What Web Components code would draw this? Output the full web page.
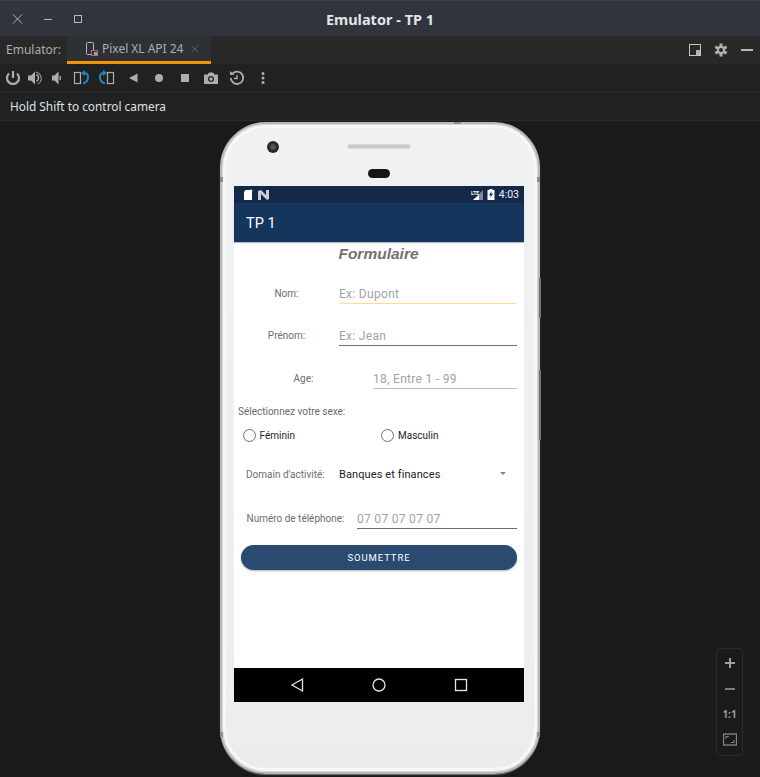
<!DOCTYPE html>
<html lang="fr">
<head>
<meta charset="utf-8">
<title>Emulator - TP 1</title>
<style>
  html, body { margin: 0; height: 100%; background: #1a1a1a; overflow: hidden; }
  body { font-family: "Noto Sans", sans-serif; display: flex; flex-direction: column; }
</style>
</head>
<body>
<emu-titlebar>Emulator - TP 1</emu-titlebar>
<emu-tabbar></emu-tabbar>
<emu-toolbar></emu-toolbar>
<emu-notice>Hold Shift to control camera</emu-notice>
<emu-stage>
  <phone-shell>
    <tp-form></tp-form>
  </phone-shell>
</emu-stage>

<script>
class EmuTitlebar extends HTMLElement {
  constructor() {
    super();
    this.attachShadow({mode: "open"}).innerHTML = `
      <style>
        :host { display: grid; grid-template-columns: 1fr auto 1fr; align-items: center; height: 36px; box-sizing: border-box;
                background: #30343d; border-top: 1px solid #3b404a; color: #e2e4e8; font-size: 14.500px; font-weight: 700; }
        .btns { display: flex; padding-left: 3px; }
        .btns svg { width: 30px; height: 16px; }
      </style>
      <div class="btns">
        <svg viewBox="0 0 30 16" fill="none" stroke="#b4b7bc"><path d="M10 3.500l9 9M19 3.500l-9 9"/></svg>
        <svg viewBox="0 0 30 16" fill="none" stroke="#b4b7bc"><path d="M11 8.500h8"/></svg>
        <svg viewBox="0 0 30 16" fill="none" stroke="#b4b7bc"><rect x="11.500" y="4.500" width="7" height="7"/></svg>
      </div>
      <slot></slot>
      <span></span>`;
  }
}

class EmuTabbar extends HTMLElement {
  constructor() {
    super();
    this.attachShadow({mode: "open"}).innerHTML = `
      <style>
        :host { display: flex; align-items: stretch; height: 28px; box-sizing: border-box; background: #282828; color: #a9afb6; font-size: 12px; }
        .lbl { width: 67px; padding-left: 6px; box-sizing: border-box; line-height: 28px; }
        .tab { width: 144px; box-sizing: border-box; background: #2f3033; border-bottom: 3px solid #f29600; display: flex; align-items: center; padding-left: 18px; }
        .tab svg { width: 14px; height: 16px; margin-right: 3px; }
        .tab span { letter-spacing: -.02px; }
        .tab svg.x { width: 8px; height: 8px; margin: 0 0 0 8px; }
        .right { margin-left: auto; display: flex; align-items: center; }
        .right svg { width: 26px; height: 16px; }
      </style>
      <div class="lbl">Emulator:</div>
      <div class="tab">
        <svg viewBox="0 0 14 16" fill="none"><rect x="1.500" y="1.500" width="7" height="12" rx="1" stroke="#b4b7bc"/><rect x="6.500" y="9.500" width="6" height="5" fill="#2f3033" stroke="#8d6fc0"/><rect x="9" y="11" width="3" height="3" fill="#f29600"/></svg>
        <span>Pixel XL API 24</span>
        <svg class="x" viewBox="0 0 8 8" fill="none" stroke="#5e6165"><path d="M.5 .5l7 7M7.500 .5l-7 7"/></svg>
      </div>
      <div class="right">
        <svg viewBox="0 0 26 16"><rect x="7.500" y="2.500" width="11" height="11" fill="none" stroke="#c4c4c4"/><rect x="14" y="8" width="4" height="5" fill="#b4b4b4"/></svg>
        <svg viewBox="0 0 26 16"><g fill="#b0b0b0"><circle cx="13" cy="8" r="4.200"/><rect x="11.500" y="1.500" width="3" height="13"/><rect x="11.500" y="1.500" width="3" height="13" transform="rotate(60 13 8)"/><rect x="11.500" y="1.500" width="3" height="13" transform="rotate(120 13 8)"/></g><circle cx="13" cy="8" r="2" fill="#282828"/></svg>
        <svg viewBox="0 0 26 16"><rect x="7" y="7" width="12" height="2" fill="#b8b8b8"/></svg>
      </div>`;
  }
}

class EmuToolbar extends HTMLElement {
  constructor() {
    super();
    const g = "#adadad", b = "#1f87c9";
    const rot = (flip) => `<svg viewBox="0 0 26 16" fill="none">
      <g ${flip ? 'transform="translate(26 0) scale(-1 1)"' : ""}>
        <rect x="6.500" y="2.500" width="6" height="11" stroke="${g}" stroke-width="1.200"/>
        <path d="M16 3h.5a3.500 3.500 0 0 1 3.500 4c0 3-2 5.500-5 6.500" stroke="${b}" stroke-width="2"/>
        <path d="M17 0v6l-4-3z" fill="${b}"/>
      </g></svg>`;
    const icons = [
      [22, `<svg viewBox="0 0 22 16" fill="none" stroke="${g}" stroke-width="2.200"><path d="M11 1v7"/><path d="M7 3.500a6 6 0 1 0 8 0"/></svg>`],
      [22, `<svg viewBox="0 0 22 16"><path d="M4 5.500h3l4-4v13l-4-4h-3z" fill="${g}"/><path d="M12.500 4.500a4 4 0 0 1 0 7" fill="none" stroke="${g}" stroke-width="1.500"/><path d="M12 2a6.500 6.500 0 0 1 2 12" fill="none" stroke="${g}" stroke-width="1"/></svg>`],
      [22, `<svg viewBox="0 0 22 16"><path d="M6 5.500h2.500l4-4v13l-4-4h-2.500z" fill="${g}"/><path d="M13.500 6a2.500 2.500 0 0 1 0 4" fill="none" stroke="${g}" stroke-width="1.300"/></svg>`],
      [26, rot(false)],
      [26, rot(true)],
      [26, `<svg viewBox="0 0 26 16"><path d="M17.500 3.500v9l-8.500-4.500z" fill="${g}"/></svg>`],
      [26, `<svg viewBox="0 0 26 16"><circle cx="13" cy="8" r="4" fill="${g}"/></svg>`],
      [26, `<svg viewBox="0 0 26 16"><rect x="9" y="4" width="8" height="8" fill="${g}"/></svg>`],
      [26, `<svg viewBox="0 0 26 16"><path d="M6 4.500h3.500l1.500-2h4l1.500 2h3.500v9.500h-14z" fill="${g}"/><circle cx="13" cy="9" r="3" fill="#222"/><circle cx="13" cy="9" r="1.700" fill="${g}"/></svg>`],
      [26, `<svg viewBox="0 0 26 16" fill="none" stroke="${g}" stroke-width="1.800"><path d="M8.500 3.500a6.200 6.200 0 1 1-1.700 4.500"/><path d="M13 5v3.500l-3 0" stroke-width="1.400"/><path d="M6 1v4h4.500z" fill="${g}" stroke="none"/></svg>`],
      [26, `<svg viewBox="0 0 26 16"><g fill="${g}"><circle cx="13" cy="3.500" r="1.500"/><circle cx="13" cy="8" r="1.500"/><circle cx="13" cy="12.500" r="1.500"/></g></svg>`]
    ];
    this.attachShadow({mode: "open"}).innerHTML = `
      <style>
        :host { display: flex; align-items: center; height: 29px; box-sizing: border-box; padding-left: 2px; background: #212121; border-bottom: 1px solid #2a2a2a; }
        span { display: flex; }
        svg { width: 100%; height: 16px; }
      </style>
      ${icons.map(i => `<span style="width:${i[0]}px">${i[1]}</span>`).join("")}`;
  }
}

class EmuNotice extends HTMLElement {
  constructor() {
    super();
    this.attachShadow({mode: "open"}).innerHTML = `
      <style>
        :host { display: block; height: 28px; box-sizing: border-box; padding-left: 10px; background: #212121; border-bottom: 1px solid #2a2a2a;
                color: #dde3ea; font-size: 11.850px; line-height: 27px; }
      </style>
      <slot></slot>`;
  }
}

class EmuStage extends HTMLElement {
  constructor() {
    super();
    this.attachShadow({mode: "open"}).innerHTML = `
      <style>
        :host { display: flex; justify-content: center; flex: 1; position: relative; padding-top: 1px; background: #1a1a1a; }
        .zoom { position: absolute; right: 17px; top: 527px; width: 27px; height: 108px; box-sizing: border-box; border: 1px solid #2b2b2b; border-radius: 4px;
                display: flex; flex-direction: column; align-items: center; justify-content: space-between; padding: 7px 0 8px; }
        .zoom svg { width: 14px; height: 14px; display: block; }
        .zoom b { font: 700 10px/14px "Noto Sans", sans-serif; color: #9a9a9a; }
      </style>
      <slot></slot>
      <div class="zoom">
        <svg viewBox="0 0 14 14" fill="#a0a0a0"><rect x="2" y="6" width="10" height="2"/><rect x="6" y="2" width="2" height="10"/></svg>
        <svg viewBox="0 0 14 14" fill="#7e7e7e"><rect x="2" y="6" width="10" height="2"/></svg>
        <b>1:1</b>
        <svg viewBox="0 0 14 14" fill="none" stroke="#858585"><rect x="0.500" y="1" width="13" height="11" stroke-width="1.300"/><path d="M3 6V3.500h3M11 7v2.500H8" stroke-width="1"/></svg>
      </div>`;
  }
}

class PhoneShell extends HTMLElement {
  constructor() {
    super();
    this.attachShadow({mode: "open"}).innerHTML = `
      <style>
        :host { display: block; position: relative; width: 320px; height: 652px; box-sizing: border-box; padding: 62px 14px 70px 12px;
                border: 2px solid #bcb7b8; border-radius: 46px; background: linear-gradient(#f0f1f2, #eeeff1 60%, #ebecee);
                box-shadow: inset 0 0 0 1px #d9d6d7, inset 0 0 0 4px #f7f7f8, 0 1px 1px #77757a; }
        .camera { position: absolute; left: 45px; top: 17px; width: 12px; height: 12px; border-radius: 50%; background: radial-gradient(circle, #555 0 25%, #232323 45%, #3c3c3c 100%); }
        .speaker { position: absolute; left: 125px; top: 20px; width: 64px; height: 5px; box-sizing: border-box; border-radius: 3px; background: #c9c9cb; border: 1px solid #dcdcdd; }
        .sensor { position: absolute; left: 146px; top: 45px; width: 22px; height: 9px; border-radius: 5px; background: #151515; }
        .key { position: absolute; right: -3px; width: 2px; background: #757375; }
        .band { position: absolute; background: #918e8f; }
        .screen { height: 516px; background: #fff; display: flex; flex-direction: column; }
        .status { height: 17px; background: #14294a; display: flex; align-items: center; padding: 0 5px 0 9px; color: #f1f3f6; font: 10.500px "Roboto", sans-serif; flex: none; }
        .status svg { display: block; }
        .status .r { margin-left: auto; display: flex; align-items: center; gap: 4px; }
        .appbar { height: 39px; background: #14355c; color: #fff; font: 14.500px/42px "Roboto", sans-serif; padding-left: 12px; flex: none; box-shadow: 0 1px 1px #b5bcc6; box-sizing: border-box; }
        .body { flex: 1; min-height: 0; }
        .nav { height: 34px; background: #000; display: grid; grid-template-columns: repeat(3, 82px); justify-content: center; align-items: center; flex: none; }
        .nav svg { width: 16px; height: 16px; justify-self: center; }
      </style>
      <div class="camera"></div>
      <div class="speaker"></div>
      <div class="sensor"></div>
      <div class="key" style="top:154px;height:40px"></div>
      <div class="key" style="top:246px;height:70px"></div>
      <div class="band" style="left:-2px;top:53px;width:3px;height:5px"></div>
      <div class="band" style="right:-2px;top:53px;width:3px;height:5px"></div>
      <div class="band" style="left:-2px;bottom:35px;width:3px;height:5px"></div>
      <div class="band" style="right:-2px;bottom:35px;width:3px;height:5px"></div>
      <div class="band" style="left:232px;top:-2px;width:7px;height:2px"></div>
      <div class="screen">
        <div class="status">
          <svg width="10" height="11" viewBox="0 0 10 11" fill="#fff"><path d="M2.500 1h4.500a1 1 0 0 1 2 1.500v7.500a.8.8 0 0 1-1 1h-6a.8.8 0 0 1-1-1V3z"/></svg>
          <svg width="11" height="10" viewBox="0 0 11 10" style="margin-left:5px"><path d="M0 1l3-1 5 5V0h3v9l-2 1-6-6v6H0z" fill="#c8ced6"/></svg>
          <span class="r">
            <svg width="12" height="10" viewBox="0 0 12 10"><path d="M12 0v10H2z" fill="#7f8b9c"/><path d="M8 5v5H2z" fill="#fff"/><text x="0" y="4.500" font-size="5" font-weight="700" font-family="Roboto" fill="#fff">LTE</text></svg>
            <svg width="8" height="11" viewBox="0 0 8 11"><path d="M2.500 0h3v1h2v10H.5V1h2z" fill="#fff"/><path d="M4.500 2L2 6.200h1.800L3.300 9 6 4.800H4.200z" fill="#14294a"/></svg>
            <span>4:03</span>
          </span>
        </div>
        <div class="appbar">TP 1</div>
        <div class="body"><slot></slot></div>
        <div class="nav">
          <svg viewBox="0 0 16 16" fill="none" stroke="#e6e6e6" stroke-width="1.300"><path d="M13.500 2v12L3 8z"/></svg>
          <svg viewBox="0 0 16 16" fill="none" stroke="#e6e6e6" stroke-width="1.300"><circle cx="8" cy="8" r="6"/></svg>
          <svg viewBox="0 0 16 16" fill="none" stroke="#e6e6e6" stroke-width="1.300"><rect x="2.500" y="2.500" width="11" height="11"/></svg>
        </div>
      </div>`;
  }
}

class FormField extends HTMLElement {
  connectedCallback() {
    const label = this.getAttribute("label");
    const hint = this.getAttribute("hint");
    this.shadowRoot || this.attachShadow({mode: "open"});
    this.shadowRoot.innerHTML = `
      <style>
        :host { display: grid; grid-template-columns: var(--label-w, 105px) 1fr; height: var(--h, 43px); padding-right: 7px; box-sizing: border-box; align-items: end; }
        .lab { text-align: center; font-size: 10px; color: #6d6d6d; line-height: 18px; padding-bottom: 1px; }
        .inp { border-bottom: var(--line, 1px solid #bdbdbd); font-size: 12px; letter-spacing: .3px; color: #a2a2a2; line-height: 18px; }
      </style>
      <div class="lab">${label}</div>
      <div class="inp">${hint}</div>`;
  }
}

class RadioItem extends HTMLElement {
  constructor() {
    super();
    this.attachShadow({mode: "open"}).innerHTML = `
      <style>
        :host { display: flex; align-items: center; gap: 4px; font-size: 10px; color: #1d1d1d; }
        i { width: 13px; height: 13px; box-sizing: border-box; border: 1.500px solid #6f6f6f; border-radius: 50%; }
      </style>
      <i></i><slot></slot>`;
  }
}

class TpForm extends HTMLElement {
  constructor() {
    super();
    this.attachShadow({mode: "open"}).innerHTML = `
      <style>
        :host { display: flex; flex-direction: column; height: 100%; font-family: "Roboto", sans-serif; }
        h1 { margin: 0 0 0 -1px; height: 20px; text-align: center; font: italic 700 15.500px/24px "Liberation Sans", sans-serif; color: #737373; }
        .sexe { font-size: 10px; color: #6a6a6a; padding: 17px 0 0 4px; line-height: 12px; }
        .radios { display: grid; grid-template-columns: 138.500px 1fr; padding: 11px 0 0 8.500px; height: 13px; }
        .domain { display: grid; grid-template-columns: 105px 1fr 24px; align-items: center; margin-top: 22px; height: 20px; }
        .domain .lab { font-size: 10px; color: #6d6d6d; padding-left: 12px; }
        .domain .val { font-size: 11px; letter-spacing: .1px; color: #1c1c1c; }
        .domain svg { width: 6px; height: 3px; margin-bottom: 2px; }
        button { display: block; margin: 16px 7px 0; height: 25px; border: 0; border-radius: 12.500px; background: #2a4a70; color: #fff; font: 400 9.500px "Roboto", sans-serif; letter-spacing: .9px;
                 box-shadow: 0 1px 2px rgba(0,0,0,.3); }
      </style>
      <h1>Formulaire</h1>
      <form-field label="Nom:" hint="Ex: Dupont" style="--h:42px;--line:1px solid #fbdf8c"></form-field>
      <form-field label="Prénom:" hint="Ex: Jean" style="--h:42px;--line:1px solid #6f6f6f"></form-field>
      <form-field label="Age:" hint="18, Entre 1 - 99" style="--label-w:139px"></form-field>
      <div class="sexe">Sélectionnez votre sexe:</div>
      <div class="radios"><radio-item>Féminin</radio-item><radio-item>Masculin</radio-item></div>
      <div class="domain">
        <div class="lab">Domain d'activité:</div>
        <div class="val">Banques et finances</div>
        <svg viewBox="0 0 6 3" fill="#888"><path d="M0 0h6L3 3z"/></svg>
      </div>
      <form-field label="Numéro de téléphone:" hint="07 07 07 07 07" style="--label-w:123px;--h:45px;--line:1px solid #6f6f6f"></form-field>
      <button type="button">SOUMETTRE</button>`;
  }
}

customElements.define("emu-titlebar", EmuTitlebar);
customElements.define("emu-tabbar", EmuTabbar);
customElements.define("emu-toolbar", EmuToolbar);
customElements.define("emu-notice", EmuNotice);
customElements.define("emu-stage", EmuStage);
customElements.define("phone-shell", PhoneShell);
customElements.define("form-field", FormField);
customElements.define("radio-item", RadioItem);
customElements.define("tp-form", TpForm);
</script>
</body>
</html>
